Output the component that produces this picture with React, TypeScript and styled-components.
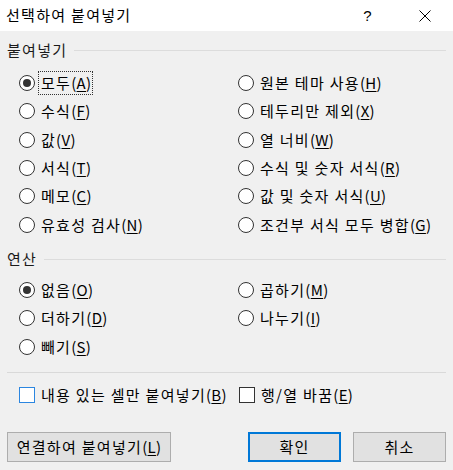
import React from "react";
import styled, { createGlobalStyle } from "styled-components";

const Global = createGlobalStyle`
  html, body { margin: 0; padding: 0; background: #f0f0f0; }
  body { font-family: "Noto Sans CJK KR", "Noto Sans", sans-serif; }
`;

const Window = styled.div`
  width: 453px;
  height: 470px;
  overflow: hidden;
  background: #f0f0f0;
  display: flex;
  flex-direction: column;
  font-family: "Noto Sans CJK KR", "Noto Sans", sans-serif;
  font-size: 15px;
  letter-spacing: 1.3px;
  color: #000;
`;

const TitleBar = styled.div`
  height: 31px;
  background: #fff;
  display: flex;
  align-items: center;
  flex-shrink: 0;
`;

const Title = styled.div`
  flex: 1;
  padding-left: 6px;
  font-size: 15px;
  line-height: 20px;
  margin-top: -2px;
`;

const CaptionButton = styled.div`
  width: 57px;
  height: 31px;
  display: flex;
  align-items: center;
  justify-content: center;
  font-family: "Liberation Sans", sans-serif;
  font-size: 15px;
  letter-spacing: 0;
`;

const Body = styled.div`
  flex: 1;
  display: flex;
  flex-direction: column;
  padding: 9px 7px 8px 7px;
`;

const GroupHeader = styled.div<{ $top?: number }>`
  display: flex;
  align-items: center;
  gap: 7px;
  height: 20px;
  margin-top: ${(p) => p.$top ?? 0}px;
  color: #1a1a1a;
  line-height: 20px;
`;

const HeaderLine = styled.div`
  flex: 1;
  height: 1px;
  background: #dcdcdc;
  margin-top: 1px;
`;

const OptionGrid = styled.div<{ $top: number; $rows: number }>`
  display: grid;
  grid-template-columns: 219px 1fr;
  grid-template-rows: repeat(${(p) => p.$rows}, 28.33px);
  margin-left: 12px;
  margin-top: ${(p) => p.$top}px;
`;

const Cell = styled.div`
  display: flex;
  align-items: center;
`;

const Option = styled.label`
  display: flex;
  align-items: center;
`;

const RadioCircle = styled.span<{ $checked?: boolean }>`
  width: 16px;
  height: 16px;
  box-sizing: border-box;
  border: 1px solid #333;
  border-radius: 50%;
  background: #fff;
  display: flex;
  align-items: center;
  justify-content: center;
  flex-shrink: 0;
  &::after {
    content: "";
    width: 8px;
    height: 8px;
    border-radius: 50%;
    background: ${(p) => (p.$checked ? "#333" : "transparent")};
  }
`;

const CheckBox = styled.span<{ $accent?: boolean }>`
  width: 16px;
  height: 16px;
  box-sizing: border-box;
  border: 1px solid ${(p) => (p.$accent ? "#2b86e0" : "#333")};
  background: #fff;
  flex-shrink: 0;
`;

const OptionText = styled.span<{ $focus?: boolean }>`
  margin-left: 3px;
  padding: 1px 1px 1px 2px;
  line-height: 20px;
  border: 1px ${(p) => (p.$focus ? "dotted #333" : "solid transparent")};
  white-space: nowrap;
`;

const Accel = styled.span`
  letter-spacing: 0.3px;
`;

const Key = styled.span`
  text-decoration: underline;
  text-underline-offset: 2px;
`;

const Separator = styled.div`
  height: 1px;
  background: #d9d9d9;
  margin-top: 11px;
`;

const CheckRow = styled.div`
  display: grid;
  grid-template-columns: 220px 1fr;
  height: 28px;
  margin: 8px 0 0 12px;
`;

const Footer = styled.div`
  display: flex;
  justify-content: space-between;
  margin-top: auto;
`;

const ButtonGroup = styled.div`
  display: flex;
  gap: 12px;
`;

const Button = styled.button<{ $width: number; $default?: boolean }>`
  width: ${(p) => p.$width}px;
  height: 30px;
  box-sizing: border-box;
  background: #e1e1e1;
  border: ${(p) => (p.$default ? "2px solid #0078d7" : "1px solid #adadad")};
  font-family: "Noto Sans CJK KR", "Noto Sans", sans-serif;
  font-size: 15px;
  letter-spacing: 1.3px;
  line-height: 20px;
  color: #000;
  padding: 0;
  display: flex;
  align-items: center;
  justify-content: center;
`;

type Opt = { text: string; key: string; checked?: boolean; focus?: boolean };

const pasteLeft: Opt[] = [
  { text: "모두", key: "A", checked: true, focus: true },
  { text: "수식", key: "F" },
  { text: "값", key: "V" },
  { text: "서식", key: "T" },
  { text: "메모", key: "C" },
  { text: "유효성 검사", key: "N" },
];
const pasteRight: Opt[] = [
  { text: "원본 테마 사용", key: "H" },
  { text: "테두리만 제외", key: "X" },
  { text: "열 너비", key: "W" },
  { text: "수식 및 숫자 서식", key: "R" },
  { text: "값 및 숫자 서식", key: "U" },
  { text: "조건부 서식 모두 병합", key: "G" },
];
const opLeft: Opt[] = [
  { text: "없음", key: "O", checked: true },
  { text: "더하기", key: "D" },
  { text: "빼기", key: "S" },
];
const opRight: Opt[] = [
  { text: "곱하기", key: "M" },
  { text: "나누기", key: "I" },
];

const Mnemonic = ({ k }: { k: string }) => (
  <Accel>
    (<Key>{k}</Key>)
  </Accel>
);

const Label = ({ o }: { o: Opt }) => (
  <OptionText $focus={o.focus}>
    {o.text}
    <Mnemonic k={o.key} />
  </OptionText>
);

const Radio = ({ o }: { o: Opt }) => (
  <Option>
    <RadioCircle $checked={o.checked} />
    <Label o={o} />
  </Option>
);

const Columns = ({ left, right }: { left: Opt[]; right: Opt[] }) => (
  <>
    {left.map((o, i) => (
      <Cell key={o.key} style={{ gridColumn: 1, gridRow: i + 1 }}>
        <Radio o={o} />
      </Cell>
    ))}
    {right.map((o, i) => (
      <Cell key={o.key} style={{ gridColumn: 2, gridRow: i + 1 }}>
        <Radio o={o} />
      </Cell>
    ))}
  </>
);

export default function App() {
  return (
    <Window>
      <Global />
      <TitleBar>
        <Title>선택하여 붙여넣기</Title>
        <CaptionButton>?</CaptionButton>
        <CaptionButton>
          <svg width="12" height="12" viewBox="0 0 12 12">
            <path d="M0.5 0.5 L11.5 11.5 M11.5 0.5 L0.5 11.5" stroke="#000" strokeWidth="1" fill="none" />
          </svg>
        </CaptionButton>
      </TitleBar>
      <Body>
        <GroupHeader>
          <span>붙여넣기</span>
          <HeaderLine />
        </GroupHeader>
        <OptionGrid $top={9} $rows={6}>
          <Columns left={pasteLeft} right={pasteRight} />
        </OptionGrid>
        <GroupHeader $top={10}>
          <span>연산</span>
          <HeaderLine />
        </GroupHeader>
        <OptionGrid $top={7} $rows={3}>
          <Columns left={opLeft} right={opRight} />
        </OptionGrid>
        <Separator />
        <CheckRow>
          <Option>
            <CheckBox $accent />
            <Label o={{ text: "내용 있는 셀만 붙여넣기", key: "B" }} />
          </Option>
          <Option>
            <CheckBox />
            <Label o={{ text: "행/열 바꿈", key: "E" }} />
          </Option>
        </CheckRow>
        <Footer>
          <Button $width={164}>
            연결하여 붙여넣기
            <Mnemonic k="L" />
          </Button>
          <ButtonGroup>
            <Button $width={93} $default>
              확인
            </Button>
            <Button $width={93}>취소</Button>
          </ButtonGroup>
        </Footer>
      </Body>
    </Window>
  );
}
